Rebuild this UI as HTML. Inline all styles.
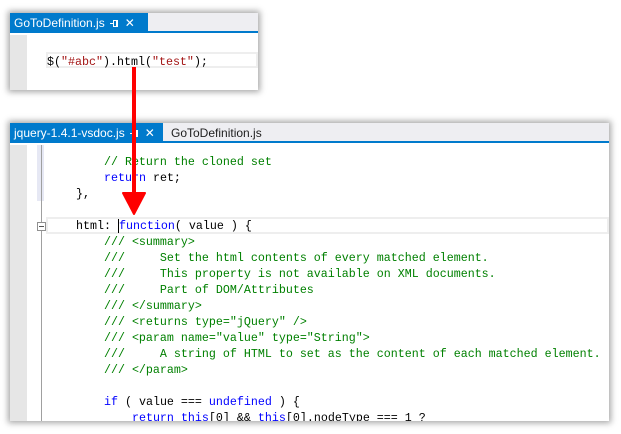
<!DOCTYPE html>
<html><head><meta charset="utf-8"><style>
*{margin:0;padding:0;box-sizing:border-box}
body{width:621px;height:434px;background:#fff;position:relative;overflow:hidden;font-family:"Liberation Sans",sans-serif}
.win{position:absolute;background:#fff;box-shadow:0 0 6px 2px rgba(0,0,0,.35);overflow:hidden}
.tabbar{position:absolute;left:0;top:0;right:0;height:20px;background:#eeeef2;border-bottom:2px solid #007acc}
.tab{position:absolute;top:0;height:20px;font-size:12px;line-height:20px;padding-left:4px;color:#1e1e1e;white-space:nowrap}
.tab.act{background:#007acc;color:#fff}
.pin{display:inline-block;position:relative;width:9px;height:7px;margin-left:5px;vertical-align:middle}
.pin:before{content:"";position:absolute;left:0;top:3px;width:3px;height:1px;background:#fff}
.pin:after{content:"";position:absolute;left:3px;top:0;width:5px;height:7px;border:1px solid #fff;border-right-width:2px;box-sizing:border-box}
.gut{position:absolute;left:0;bottom:0;width:17px;background:#e6e6e6}
.code{position:absolute;font-family:"Liberation Mono",monospace;font-size:11.66px;line-height:16px;white-space:pre;color:#000}
.c{color:#008000}.k{color:#0000ff}.s{color:#a31515}
</style></head><body>
<div class="win" style="left:10px;top:13px;width:248px;height:77px">
 <div class="tabbar"></div>
 <div class="tab act" style="left:0;width:138px">GoToDefinition.js<span class="pin"></span><span style="margin-left:6px">✕</span></div>
 <div class="gut" style="top:22px"></div>
 <div style="position:absolute;left:36px;top:39px;width:212px;height:16px;border:2px solid #eeeeee"></div>
 <div class="code" style="left:37px;top:41px">$(<span class="s">"#abc"</span>).html(<span class="s">"test"</span>);</div>
</div>
<div class="win" style="left:10px;top:123px;width:599px;height:298px">
 <div class="tabbar"></div>
 <div class="tab act" style="left:0;width:153px">jquery-1.4.1-vsdoc.js<span class="pin"></span><span style="margin-left:6px">✕</span></div>
 <div class="tab" style="left:157px">GoToDefinition.js</div>
 <div class="gut" style="top:22px"></div>
 <div style="position:absolute;left:27px;top:22px;width:7px;height:56px;background:#e6e8f4"></div>
 <div style="position:absolute;left:31px;top:22px;width:1px;height:276px;background:#a0a0a0"></div>
 <div style="position:absolute;left:27px;top:99px;width:9px;height:9px;border:1px solid #909090;background:#fff"></div>
 <div style="position:absolute;left:29px;top:103px;width:5px;height:1px;background:#555"></div>
 <div style="position:absolute;left:36px;top:94px;width:563px;height:17px;border:2px solid #eeeeee"></div>
 <div class="code" style="left:38px;top:31px"><span class="c">        // Return the cloned set</span>
        <span class="k">return</span> ret;
    },

    html: <span style="border-left:1px solid #000"></span><span class="k">function</span>( value ) {
<span class="c">        /// &lt;summary&gt;
        ///     Set the html contents of every matched element.
        ///     This property is not available on XML documents.
        ///     Part of DOM/Attributes
        /// &lt;/summary&gt;
        /// &lt;returns type="jQuery" /&gt;
        /// &lt;param name="value" type="String"&gt;
        ///     A string of HTML to set as the content of each matched element.
        /// &lt;/param&gt;</span>

        <span class="k">if</span> ( value === <span class="k">undefined</span> ) {
            <span class="k">return</span> <span class="k">this</span>[0] &amp;&amp; <span class="k">this</span>[0].nodeType === 1 ?</div>
</div>
<svg style="position:absolute;left:0;top:0" width="621" height="434">
 <rect x="132" y="67" width="4" height="132" fill="#f00"/>
 <path d="M123 193 L134 214 L145 193 Z" fill="#f00" stroke="#f00" stroke-width="2" stroke-linejoin="round"/>
</svg>
</body></html>
